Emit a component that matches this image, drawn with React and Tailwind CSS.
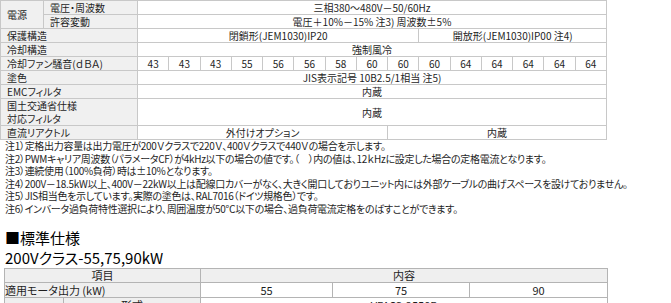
import React from 'react';

const fanNoise = [43, 43, 43, 55, 56, 56, 58, 60, 60, 60, 64, 64, 64, 64, 64];

const notes = [
    '注1）定格出力容量は出力電圧が200Ｖクラスで220Ｖ、400Ｖクラスで440Ｖの場合を示します。',
    '注2）PWMキャリア周波数（パラメータCF）が4kHz以下の場合の値です。（　）内の値は、12ｋHzに設定した場合の定格電流となります。',
    '注3）連続使用（100%負荷）時は±10%となります。',
    '注4）200V－18.5kW以上、400V－22kW以上は配線口カバーがなく、大きく開口しておりユニット内には外部ケーブルの曲げスペースを設けておりません。',
    '注5）JIS相当色を示しています。実際の塗色は、RAL7016（ドイツ規格色）です。',
    '注6）インバータ過負荷特性選択により、周囲温度が50℃以下の場合、過負荷電流定格をのばすことができます。',
];

// label cell / data cell
const lb = 'border border-[#c8c8c8] bg-[#f0f0f0] px-[6px] py-0 text-left font-normal whitespace-nowrap';
const dt = 'border border-[#c8c8c8] bg-white p-0 text-center whitespace-nowrap';

function SpecTable() {
    return (
        <table className="table-fixed border-collapse w-[607px] text-[10px] leading-[13px]">
            <colgroup>
                <col className="w-[43px]" />
                <col className="w-[94px]" />
                {fanNoise.map((_, i) => (
                    <col key={i} />
                ))}
            </colgroup>
            <tbody>
                <tr className="h-[14px]">
                    <td rowSpan={2} className={lb}>電源</td>
                    <td className={lb}>電圧・周波数</td>
                    <td colSpan={15} className={dt}>三相380～480V－50/60Hz</td>
                </tr>
                <tr className="h-[14px]">
                    <td className={lb}>許容変動</td>
                    <td colSpan={15} className={dt}>電圧＋10%－15% 注3) 周波数±5%</td>
                </tr>
                <tr className="h-[14px]">
                    <td colSpan={2} className={lb}>保護構造</td>
                    <td colSpan={9} className={dt}>閉鎖形(JEM1030)IP20</td>
                    <td colSpan={6} className={dt}>開放形(JEM1030)IP00 注4)</td>
                </tr>
                <tr className="h-[14px]">
                    <td colSpan={2} className={lb}>冷却構造</td>
                    <td colSpan={15} className={dt}>強制風冷</td>
                </tr>
                <tr className="h-[14px]">
                    <td colSpan={2} className={lb}>冷却ファン騒音(ｄＢＡ)</td>
                    {fanNoise.map((v, i) => (
                        <td key={i} className={dt}>{v}</td>
                    ))}
                </tr>
                <tr className="h-[14px]">
                    <td colSpan={2} className={lb}>塗色</td>
                    <td colSpan={15} className={dt}>JIS表示記号 10B2.5/1相当 注5)</td>
                </tr>
                <tr className="h-[14px]">
                    <td colSpan={2} className={lb}>EMCフィルタ</td>
                    <td colSpan={15} className={dt}>内蔵</td>
                </tr>
                <tr className="h-[26px]">
                    <td colSpan={2} className={lb}>国土交通省仕様<br />対応フィルタ</td>
                    <td colSpan={15} className={dt}>内蔵</td>
                </tr>
                <tr className="h-[14px]">
                    <td colSpan={2} className={lb}>直流リアクトル</td>
                    <td colSpan={8} className={dt}>外付けオプション</td>
                    <td colSpan={7} className={dt}>内蔵</td>
                </tr>
            </tbody>
        </table>
    );
}

function StandardTable() {
    const th = 'border border-[#b4b4b4] bg-[#efefef] p-0 text-center font-normal';
    const td = 'border border-[#b4b4b4] bg-white p-0 text-center';
    return (
        <table className="table-fixed border-collapse w-[603px] text-[11px] leading-[13px]">
            <colgroup>
                <col className="w-[59px]" />
                <col className="w-[137px]" />
                <col className="w-[132px]" />
                <col className="w-[137px]" />
                <col className="w-[138px]" />
            </colgroup>
            <tbody>
                <tr className="h-[14px]">
                    <td colSpan={2} className={th}>項目</td>
                    <td colSpan={3} className={th}>内容</td>
                </tr>
                <tr className="h-[15px]">
                    <td colSpan={2} className="border border-[#b4b4b4] bg-[#efefef] p-0 text-left whitespace-nowrap">適用モータ出力 (kW)</td>
                    <td className={td}>55</td>
                    <td className={td}>75</td>
                    <td className={td}>90</td>
                </tr>
                <tr className="h-[15px]">
                    <td className="border border-[#b4b4b4] bg-[#efefef] p-0"></td>
                    <td className={th}>形式</td>
                    <td colSpan={3} className={td}>VFAS3-2550P</td>
                </tr>
            </tbody>
        </table>
    );
}

export default function App() {
    return (
        <div className="w-[671px] h-[303px] overflow-hidden bg-white text-[#1e1e1e] font-['Noto_Sans_CJK_JP',sans-serif] [font-feature-settings:'palt']">
            <SpecTable />

            {/* notes */}
            <div className="pl-[5px] text-[10px] leading-[12.5px] tracking-[-0.3px] whitespace-nowrap">
                {notes.map((n) => (
                    <p key={n}>{n}</p>
                ))}
            </div>

            <div className="mt-[13px] pl-[5px] text-[15px] leading-[20px] text-black">
                <p>■標準仕様</p>
                <p>200Vクラス-55,75,90kW</p>
            </div>

            <div className="pl-[4px]">
                <StandardTable />
            </div>
        </div>
    );
}
